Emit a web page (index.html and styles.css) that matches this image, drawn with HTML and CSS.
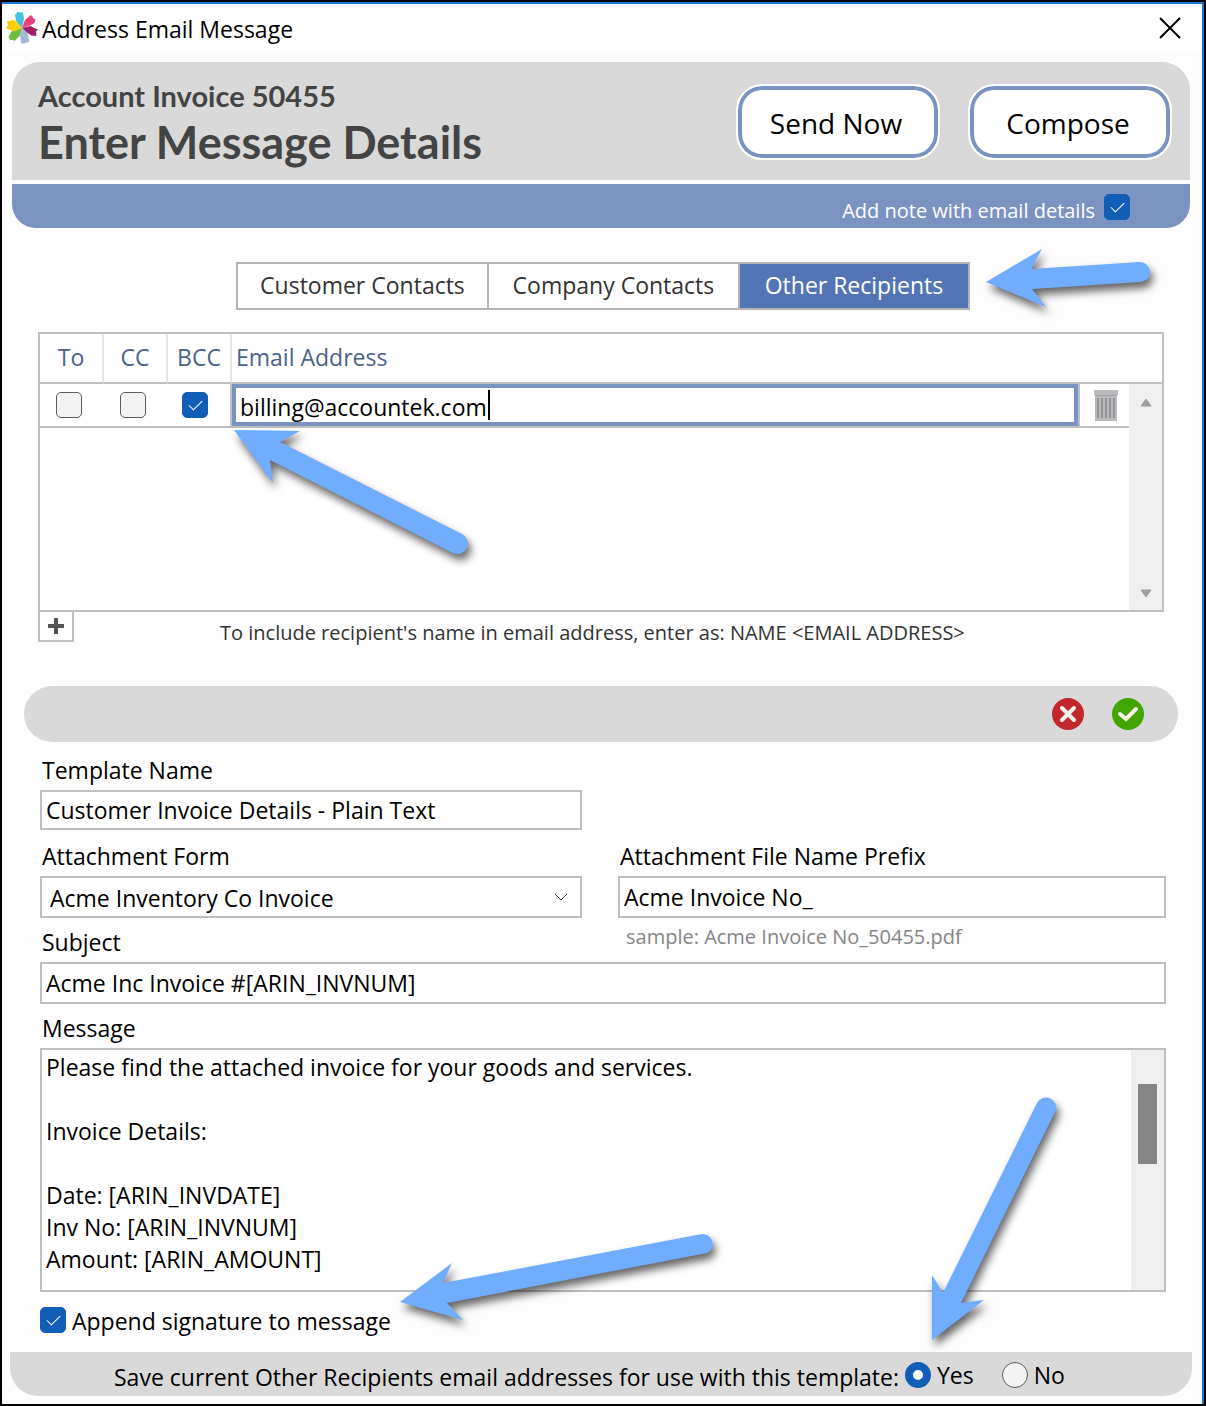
FILE: index.html
```html
<!DOCTYPE html>
<html lang="en">
<head>
<meta charset="utf-8">
<meta name="viewport" content="width=device-width, initial-scale=1">
<title>Address Email Message</title>
<link rel="stylesheet" href="styles.css">
</head>
<body>
<div class="window">
  <header class="titlebar">
    <svg class="logo" viewBox="0 0 32 32" aria-hidden="true">
      <path fill="#45c1e3" d="M16 16 10 9 9 2.500 11 1 11 0 17 .5 18 7z"/>
      <path fill="#ea4379" d="M16 16 19 8 24 3.500 26 3.500 27 6 29.500 7.500 28.500 11 24 13.500z"/>
      <path fill="#a01e68" d="M16 16 24.500 14 28 16 32 17.500 30 19.500 30.500 24 25.500 23.500 20 20z"/>
      <path fill="#a6b8da" d="M16 16 21.500 21 23.500 29.500 21 30.500 16 32 15 30 14 24z"/>
      <path fill="#6cbd45" d="M16 16 14 23.500 8.500 29 7 28 4 28 2.500 24.500 6 19z"/>
      <path fill="#ffcb05" d="M16 16 8 19.500 .5 16.500 2 12.500 .5 9.500 8.500 8z"/>
    </svg>
    <h1 class="title">Address Email Message</h1>
    <button class="close" type="button" aria-label="Close">
      <svg viewBox="0 0 22 22" aria-hidden="true"><path d="M1 1l20 20M21 1 1 21"/></svg>
    </button>
  </header>

  <form class="content">
    <section class="banner">
      <div class="headings">
        <p class="invoice">Account Invoice 50455</p>
        <h2 class="step">Enter Message Details</h2>
      </div>
      <div class="actions">
        <button class="pill" type="button">Send Now</button>
        <button class="pill" type="button">Compose</button>
      </div>
    </section>
    <div class="notebar">
      <label class="note" for="note">Add note with email details</label>
      <input class="check" id="note" type="checkbox" checked>
    </div>

    <nav class="tabs" aria-label="Recipient source">
      <button class="tab" type="button">Customer Contacts</button>
      <button class="tab" type="button">Company Contacts</button>
      <button class="tab active" type="button">Other Recipients</button>
    </nav>

    <section class="recipients">
      <div class="grid-box">
        <table class="grid">
          <colgroup>
            <col class="flag-col">
            <col class="flag-col">
            <col class="flag-col">
            <col>
            <col class="trash-col">
            <col class="gutter-col">
          </colgroup>
          <thead>
            <tr>
              <th>To</th>
              <th>CC</th>
              <th>BCC</th>
              <th class="mail" colspan="3">Email Address</th>
            </tr>
          </thead>
          <tbody>
            <tr>
              <td class="flag"><input class="check" type="checkbox" aria-label="To"></td>
              <td class="flag"><input class="check" type="checkbox" aria-label="CC"></td>
              <td class="flag bcc"><input class="check" type="checkbox" aria-label="BCC" checked></td>
              <td>
                <div class="editing">
                  <input class="address" type="text" aria-label="Email Address" value="billing@accountek.com">
                  <span class="caret"></span>
                </div>
              </td>
              <td class="trash">
                <button class="plain" type="button" aria-label="Delete recipient">
                  <svg class="bin" viewBox="0 0 24 32" aria-hidden="true">
                    <path fill="#b9babc" d="M0 1h24v5h-1v26H1V6H0z"/>
                    <path fill="#a1a2a5" d="M1 6h22v1H1z"/>
                    <path stroke="#929497" stroke-width="2" d="M4 9v20M8 9v20M12 9v20M16 9v20M20 9v20"/>
                  </svg>
                </button>
              </td>
              <td></td>
            </tr>
          </tbody>
        </table>
        <div class="scroll arrows" aria-hidden="true">
          <svg viewBox="0 0 12 9"><path d="M6 1 11 8H1z"/></svg>
          <svg viewBox="0 0 12 9"><path d="M6 8 11 1H1z"/></svg>
        </div>
      </div>
      <div class="below">
        <button class="add" type="button" aria-label="Add recipient">
          <svg viewBox="0 0 16 16" aria-hidden="true"><path d="M8 0v16M0 8h16"/></svg>
        </button>
        <p class="hint">To include recipient's name in email address, enter as: NAME &lt;EMAIL ADDRESS&gt;</p>
      </div>
    </section>

    <div class="toolbar">
      <button class="plain" type="button" aria-label="Cancel">
        <svg class="round" viewBox="0 0 32 32" aria-hidden="true"><circle cx="16" cy="16" r="16" fill="#c1282d"/><path d="M10 10l12 12M22 10 10 22" stroke="#f4f1ea" stroke-width="4" stroke-linecap="round"/></svg>
      </button>
      <button class="plain" type="button" aria-label="Accept">
        <svg class="round" viewBox="0 0 32 32" aria-hidden="true"><circle cx="16" cy="16" r="16" fill="#43a500"/><path d="M8 16l6 5L24 11" fill="none" stroke="#f4f1ea" stroke-width="4" stroke-linecap="round"/></svg>
      </button>
    </div>

    <section class="template">
      <div class="field half">
        <label for="tname">Template Name</label>
        <input class="box short" id="tname" type="text" value="Customer Invoice Details - Plain Text">
      </div>
      <div class="field half">
        <label for="form">Attachment Form</label>
        <div class="picker">
          <select class="box select" id="form"><option>Acme Inventory Co Invoice</option></select>
          <svg class="chevron" viewBox="0 0 14 8" aria-hidden="true"><path d="M1 1l6 6 6-6"/></svg>
        </div>
      </div>
      <div class="field half">
        <label for="prefix">Attachment File Name Prefix</label>
        <input class="box" id="prefix" type="text" value="Acme Invoice No_">
        <p class="sample">sample: Acme Invoice No_50455.pdf</p>
      </div>
      <div class="field wide">
        <label for="subject">Subject</label>
        <input class="box" id="subject" type="text" value="Acme Inc Invoice #[ARIN_INVNUM]">
      </div>
      <div class="field wide">
        <label for="message">Message</label>
        <div class="message">
          <textarea class="body" id="message" rows="7">Please find the attached invoice for your goods and services.

Invoice Details:

Date: [ARIN_INVDATE]
Inv No: [ARIN_INVNUM]
Amount: [ARIN_AMOUNT]</textarea>
          <div class="scroll" aria-hidden="true"><div class="thumb"></div></div>
        </div>
      </div>
      <div class="append">
        <input class="check" id="append" type="checkbox" checked>
        <label for="append">Append signature to message</label>
      </div>
    </section>

    <fieldset class="save">
      <legend class="question">Save current Other Recipients email addresses for use with this template:</legend>
      <label class="choice"><input class="radio" type="radio" name="save" checked>Yes</label>
      <label class="choice"><input class="radio" type="radio" name="save">No</label>
    </fieldset>
  </form>
  <svg class="pointers" viewBox="0 0 1206 1406" aria-hidden="true">
    <path d="M986 282 1042 249 1031 269 1140 262A10 10 0 0 1 1140 282L1032 289 1046 307z"/>
    <path d="M234 430 300 431 280 442 462 534A10 10 0 0 1 453 553L270 460 273 483z"/>
    <path d="M400 1302 452 1263 443 1283 702 1234A10 10 0 0 1 707 1253L447 1303 463 1320z"/>
    <path d="M932 1340 932 1275 943 1293 1037 1103A10 10 0 0 1 1055 1112L961 1303 984 1300z"/>
  </svg>
</div>
</body>
</html>
```
FILE: styles.css
```css
* {
  box-sizing: border-box;
}

body {
  margin: 0;
  background: #fdfdfd;
  color: #000;
  font-family: "Open Sans", "Noto Sans", sans-serif;
  font-size: 23px;
  line-height: 32px;
}

h1,
h2,
p {
  margin: 0;
}

button,
input,
select,
textarea {
  margin: 0;
  border-radius: 0;
  color: inherit;
  font: inherit;
}

svg {
  display: block;
  fill: none;
}

.window {
  position: relative;
  min-height: 100vh;
  border: 2px solid #000;
  background: #fdfdfd;
}

.window > .titlebar,
.window > .content {
  border-right: 2px solid #1676d2;
}

.titlebar {
  display: flex;
  align-items: center;
  height: 50px;
  padding: 0 21px 0 4px;
  border-top: 2px solid #1676d2;
  background: #fff;
}

.logo {
  width: 32px;
  height: 32px;
}

.title {
  flex: 1;
  padding: 2px 4px 0;
  font-size: 23px;
  font-weight: 400;
}

.close {
  width: 22px;
  padding: 0;
  border: 0;
  background: none;
}

.close svg {
  width: 22px;
  height: 22px;
  stroke: #000;
  stroke-width: 2;
}

.content {
  padding: 10px 12px 8px 10px;
}

.banner {
  display: flex;
  justify-content: space-between;
  height: 118px;
  padding: 18px 18px 0 26px;
  border-radius: 28px 28px 0 0;
  background: #d9d9d9;
  color: #444;
}

.headings {
  font-family: Lato, "Open Sans", sans-serif;
}

.invoice {
  font-size: 29px;
  font-weight: 700;
}

.step {
  font-size: 45px;
  font-weight: 700;
  line-height: 60px;
}

.actions {
  display: flex;
  gap: 28px;
  padding-top: 4px;
}

.pill {
  width: 204px;
  height: 76px;
  padding: 2px 4px 0 0;
  border: 2px solid #fff;
  border-radius: 26px;
  background: #fff;
  box-shadow: inset 0 0 0 4px #7b93c1;
  color: #000;
  font-size: 28px;
}

.notebar {
  display: flex;
  align-items: center;
  justify-content: flex-end;
  gap: 9px;
  height: 44px;
  margin-top: 4px;
  padding: 2px 60px 0 0;
  border-radius: 0 0 24px 24px;
  background: #7b93c1;
}

.note {
  padding-top: 8px;
  color: #fff;
  font-size: 20px;
}

.check,
.radio {
  display: block;
  width: 26px;
  height: 26px;
  border: 1px solid #5c5c5c;
  border-radius: 5px;
  appearance: none;
  background: #f3f3f3;
}

.check:checked {
  border-color: #115eb7;
  background: #115eb7;
}

.check:checked::after {
  display: block;
  width: 12px;
  height: 6px;
  margin: 7px auto 0;
  border: solid #fff;
  border-width: 0 0 1px 1px;
  content: "";
  transform: rotate(-45deg);
}

.tabs {
  display: flex;
  width: 734px;
  margin: 34px auto 0 224px;
  border: 2px solid #b4b4b4;
}

.tab {
  flex: 251 1 0;
  height: 44px;
  padding: 0 0 2px;
  border: 0;
  background: #fff;
  color: #333;
  white-space: nowrap;
}

.tab + .tab {
  border-left: 2px solid #b4b4b4;
}

.tab.active {
  flex-grow: 230;
  background: #5475b5;
  color: #fff;
}

.recipients {
  margin: 22px 26px 0;
}

.grid-box {
  position: relative;
  height: 280px;
  border: 2px solid #bfbfbf;
  background: #fff;
}

.grid {
  width: 100%;
  border-collapse: separate;
  border-spacing: 0;
  table-layout: fixed;
}

.flag-col {
  width: 64px;
}

.trash-col {
  width: 50px;
}

.gutter-col {
  width: 34px;
}

.grid th {
  height: 50px;
  padding: 0 0 2px;
  border-right: 2px solid #e3e3e3;
  border-bottom: 2px solid #bfbfbf;
  color: #4a6389;
  font-weight: 400;
}

.grid th:last-child {
  border-right: 0;
}

.grid td {
  height: 44px;
  padding: 0;
  border-bottom: 2px solid #bfbfbf;
}

.grid .flag .check {
  margin-left: 16px;
}

.grid .bcc {
  border-right: 2px solid #bfbfbf;
}

.grid .bcc .check {
  margin-left: 14px;
}

.grid .mail {
  padding-left: 4px;
  text-align: left;
}

.grid .trash {
  border-left: 2px solid #bfbfbf;
}

.editing {
  position: relative;
}

.address {
  display: block;
  width: 100%;
  height: 42px;
  padding: 3px 4px 0;
  border: 4px solid #7b93c1;
  outline: 0;
  background: #fff;
}

.caret {
  position: absolute;
  top: 6px;
  left: 256px;
  width: 2px;
  height: 30px;
  background: #000;
}

.plain {
  display: block;
  padding: 0;
  border: 0;
  background: none;
}

.trash .plain {
  margin-left: 14px;
}

.bin {
  width: 24px;
  height: 32px;
}

.scroll {
  flex: none;
  width: 33px;
  background: #efefef;
}

.arrows {
  display: flex;
  flex-direction: column;
  justify-content: space-between;
  position: absolute;
  top: 50px;
  right: 0;
  bottom: 0;
  padding: 14px 11px 12px;
}

.arrows svg {
  width: 12px;
  height: 9px;
  fill: #9f9f9f;
  stroke: #9f9f9f;
  stroke-linejoin: round;
}

.below {
  display: flex;
  margin-top: -2px;
}

.add {
  display: grid;
  flex: none;
  width: 36px;
  height: 32px;
  padding: 0;
  border: 2px solid #bfbfbf;
  background: #fdfdfd;
  place-items: center;
}

.add svg {
  width: 16px;
  height: 16px;
  stroke: #555;
  stroke-width: 4;
}

.hint {
  padding: 7px 0 0 146px;
  color: #333;
  font-size: 20px;
}

.toolbar {
  display: flex;
  align-items: center;
  justify-content: flex-end;
  gap: 28px;
  height: 56px;
  margin: 37px 12px 0;
  padding-right: 34px;
  border-radius: 28px;
  background: #d9d9d9;
}

.round {
  width: 32px;
  height: 32px;
}

.template {
  display: grid;
  grid-template-columns: 542fr 548fr;
  column-gap: 36px;
  margin: 12px 24px 0 28px;
}

.field {
  min-height: 86px;
}

.half:nth-child(-n + 2) {
  grid-column: 1;
}

.wide,
.append {
  grid-column: 1 / -1;
}

.field label {
  display: block;
  height: 36px;
  padding-left: 2px;
}

.field {
  height: 86px;
}

.field:has(.message) {
  height: auto;
}

.box {
  display: block;
  width: 100%;
  height: 42px;
  padding: 0 4px;
  border: 2px solid #bfbfbf;
  background: #fff;
}

.short {
  height: 40px;
}

.picker {
  position: relative;
}

.select {
  padding: 2px 8px 0;
  appearance: none;
}

.chevron {
  position: absolute;
  top: 17px;
  right: 14px;
  width: 14px;
  height: 8px;
  stroke: #444;
}

.sample {
  padding: 3px 0 0 8px;
  color: #868686;
  font-size: 20px;
}

.message {
  display: flex;
  border: 2px solid #bfbfbf;
  background: #fff;
}

.body {
  display: block;
  flex: 1;
  height: 240px;
  padding: 1px 4px;
  border: 0;
  outline: 0;
  overflow: hidden;
  background: #fff;
  line-height: 32px;
  resize: none;
}

.thumb {
  width: 19px;
  height: 80px;
  margin: 34px 7px 0;
  background: #858585;
}

.append {
  display: flex;
  align-items: center;
  gap: 6px;
  height: 60px;
  padding-bottom: 4px;
}

.append label {
  padding-top: 2px;
}

.save {
  display: flex;
  align-items: center;
  height: 44px;
  margin: 0 -2px;
  padding: 0 0 0 104px;
  border: 0;
  border-radius: 0 0 28px 28px;
  background: #d9d9d9;
}

.question {
  float: left;
  padding: 6px 0 0;
}

.choice {
  display: flex;
  align-items: center;
  gap: 6px;
  padding: 2px 0 0 6px;
}

.choice + .choice {
  padding-left: 28px;
}

.radio {
  border-radius: 50%;
}

.radio:checked {
  border: 8px solid #115eb7;
  background: #fff;
}

.pointers {
  position: absolute;
  top: -2px;
  left: -2px;
  width: 1206px;
  height: 1406px;
  fill: #70adff;
  filter: drop-shadow(3px 6px 4px rgb(0 0 0 / 60%));
  pointer-events: none;
}
```
